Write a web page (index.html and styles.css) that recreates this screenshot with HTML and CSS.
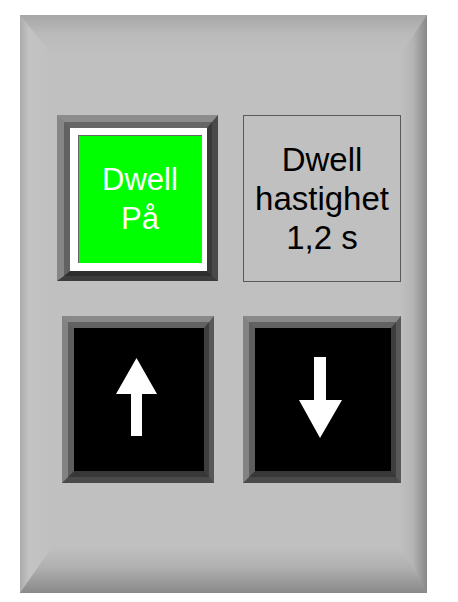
FILE: index.html
```html
<!DOCTYPE html>
<html lang="sv">
<head>
    <meta charset="UTF-8">
    <meta name="viewport" content="width=device-width, initial-scale=1.0">
    <title>Dwell</title>
    <link rel="stylesheet" href="styles.css">
</head>
<body>
    <div class="panel">
        <div class="controls">
            <!-- Dwell on/off lamp button -->
            <div class="key key-lamp">
                <div class="key-face">
                    <div class="lamp">
                        <span class="lamp-text">Dwell<br>På</span>
                    </div>
                </div>
            </div>

            <!-- Speed readout -->
            <div class="readout">
                <span>Dwell<br>hastighet<br>1,2 s</span>
            </div>

            <!-- Increase -->
            <div class="key key-arrow key-up">
                <div class="key-face">
                    <svg viewBox="0 0 130 143" width="130" height="143">
                        <polygon points="62.5,30 83,66 68,66 68,108 57,108 57,66 42,66" fill="#fff"/>
                    </svg>
                </div>
            </div>

            <!-- Decrease -->
            <div class="key key-arrow key-down">
                <div class="key-face">
                    <svg viewBox="0 0 136 143" width="136" height="143">
                        <polygon points="59,29 71,29 71,72 87,72 65,110 44,72 59,72" fill="#fff"/>
                    </svg>
                </div>
            </div>
        </div>
    </div>
</body>
</html>
```

FILE: styles.css
```css
body {
    margin: 0;
    padding: 0;
    background-color: #fff;
    font-family: "Liberation Sans", Arial, sans-serif;
}

/* raised grey panel with bevelled edges */
.panel {
    position: relative;
    width: 407px;
    height: 578px;
    margin: 15px 0 0 20px;
    box-sizing: border-box;
    padding: 100px 0 0 37px;
    background: linear-gradient(to right, #ababab 0, #c3c3c3 9px, #c0c0c0 32px, #c0c0c0 calc(100% - 27px), #b4b4b4 calc(100% - 14px), #888 100%);
}
.panel::before {
    content: "";
    position: absolute;
    top: 0;
    left: 0;
    right: 0;
    height: 40px;
    clip-path: polygon(0 0, 100% 0, calc(100% - 27px) 100%, 32px 100%);
    background: linear-gradient(to bottom, #a7a7a7, #bbbbbb 50%, #c0c0c0);
}
.panel::after {
    content: "";
    position: absolute;
    bottom: 0;
    left: 0;
    right: 0;
    height: 46px;
    clip-path: polygon(32px 0, calc(100% - 27px) 0, 100% 100%, 0 100%);
    background: linear-gradient(to bottom, #c0c0c0, #b0b0b0 45%, #898989);
}

.controls {
    display: grid;
    grid-template-columns: 161px 158px;
    grid-template-rows: 167px 167px;
    column-gap: 25px;
    row-gap: 34px;
}

/* two-ring frame around each button */
.key {
    box-sizing: border-box;
    border-style: solid;
}
.key-face {
    box-sizing: border-box;
    height: 100%;
    border-style: solid;
}

.key-lamp {
    width: 161px;
    height: 166px;
    border-width: 7px 6px 5px 7px;
    border-color: #8c8c8c #4a4a4a #3c3c3c #868686;
}
.key-lamp .key-face {
    border-width: 6px 5px 5px 6px;
    border-color: #666 #3a3a3a #2e2e2e #626262;
}
.lamp {
    box-sizing: border-box;
    height: 100%;
    border-style: solid;
    border-color: #fff;
    border-width: 7px 5px 8px 8px;
    background-color: #00ff00;
    box-shadow: inset 1px 1px 0 #666, inset -1px 0 0 #999;
    display: flex;
    align-items: center;
    justify-content: center;
}
.lamp-text {
    color: #fff;
    font-size: 31px;
    line-height: 39px;
    text-align: center;
}

.readout {
    box-sizing: border-box;
    width: 158px;
    height: 167px;
    border: 1px solid #5a5a5a;
    background-color: #c0c0c0;
    display: flex;
    align-items: center;
    justify-content: center;
}
.readout span {
    color: #000;
    font-size: 33px;
    line-height: 39px;
    text-align: center;
}

.key-arrow {
    height: 167px;
    border-width: 6px 5px 6px 6px;
    border-color: #898989 #585858 #4a4a4a #838383;
}
.key-arrow .key-face {
    border-width: 6px 5px 6px 6px;
    border-color: #626262 #3e3e3e #383838 #5e5e5e;
    background-color: #000;
}
.key-arrow svg {
    display: block;
    width: 100%;
    height: 100%;
}
.key-up {
    width: 152px;
    justify-self: center;
}
.key-down {
    width: 158px;
}
```
